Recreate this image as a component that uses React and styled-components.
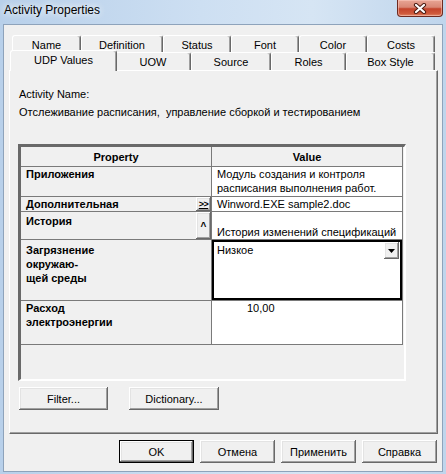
import React from 'react';
import styled, { createGlobalStyle, css } from 'styled-components';

const GlobalStyle = createGlobalStyle`
  html, body { margin: 0; padding: 0; background: #fff; }
  body {
    font-family: "Liberation Sans", Arial, sans-serif;
    font-size: 11px;
    color: #000;
  }
`;

const raised = css`
  background: #f0f0f0;
  box-shadow: inset -1px -1px #696969, inset 1px 1px #ffffff,
    inset -2px -2px #a0a0a0, inset 2px 2px #e3e3e3;
`;

const rowTabs = [
  { label: 'Name', w: 69 },
  { label: 'Definition', w: 82 },
  { label: 'Status', w: 68 },
  { label: 'Font', w: 68 },
  { label: 'Color', w: 68 },
  { label: 'Costs', w: 68 },
];

const frontTabs = [
  { label: 'UDP Values', w: 103, active: true },
  { label: 'UOW', w: 76 },
  { label: 'Source', w: 80 },
  { label: 'Roles', w: 75 },
  { label: 'Box Style', w: 89 },
];

const CloseIcon = () => (
  <svg width="14" height="11" viewBox="0 0 14 11">
    <path d="M3 2 L11 9 M11 2 L3 9" stroke="#4b1b12" strokeWidth="4.2" strokeLinecap="round" />
    <path d="M3 2 L11 9 M11 2 L3 9" stroke="#ffffff" strokeWidth="2.2" strokeLinecap="round" />
  </svg>
);

const DownArrow = () => (
  <svg width="7" height="4" viewBox="0 0 7 4">
    <path d="M0 0 H7 L3.5 4 Z" fill="#000" />
  </svg>
);

export default function App() {
  return (
    <>
      <GlobalStyle />
      <Window>
        <TitleBar>
          <Title>Activity Properties</Title>
          <CloseButton><CloseIcon /></CloseButton>
        </TitleBar>
        <Client>
          <TabRows>
            <TabRow $h={17}>
              {rowTabs.map(t => <Tab key={t.label} $w={t.w}>{t.label}</Tab>)}
            </TabRow>
            <TabRow $h={18}>
              {frontTabs.map(t => <Tab key={t.label} $w={t.w} $active={t.active}>{t.label}</Tab>)}
            </TabRow>
          </TabRows>
          <Panel>
            <Caption>Activity Name:</Caption>
            <NameText>Отслеживание расписания,  управление сборкой и тестированием</NameText>
            <Table>
              <Grid>
                <Row $h={20}>
                  <HeaderCell $left>Property</HeaderCell>
                  <HeaderCell>Value</HeaderCell>
                </Row>
                <Row $h={30}>
                  <LabelCell><LabelText>Приложения</LabelText></LabelCell>
                  <ValueCell>Модуль создания и контроля<br />расписания выполнения работ.</ValueCell>
                </Row>
                <Row $h={15}>
                  <LabelCell>
                    <LabelText>Дополнительная</LabelText>
                    <CellButton><MoreGlyph>&gt;&gt;</MoreGlyph></CellButton>
                  </LabelCell>
                  <ValueCell>Winword.EXE sample2.doc</ValueCell>
                </Row>
                <Row $h={28}>
                  <LabelCell>
                    <LabelText $pt={2}>История</LabelText>
                    <CellButton><UpGlyph>^</UpGlyph></CellButton>
                  </LabelCell>
                  <ValueCell $pt={13}>История изменений спецификаций</ValueCell>
                </Row>
                <Row $h={61}>
                  <LabelCell>
                    <LabelText $pt={3}>Загрязнение<br />окружаю-<br />щей среды</LabelText>
                  </LabelCell>
                  <Combo>
                    <ComboText>Низкое</ComboText>
                    <ComboButton><DownArrow /></ComboButton>
                  </Combo>
                </Row>
                <Row $h={44}>
                  <LabelCell><LabelText>Расход<br />электроэнергии</LabelText></LabelCell>
                  <ValueCell $pl={35}>10,00</ValueCell>
                </Row>
              </Grid>
            </Table>
            <PanelButtons>
              <PushButton $w={89}>Filter...</PushButton>
              <PushButton $w={90}>Dictionary...</PushButton>
            </PanelButtons>
          </Panel>
          <DialogButtons>
            <PushButton $w={75} $default>OK</PushButton>
            <PushButton $w={75}>Отмена</PushButton>
            <PushButton $w={75}>Применить</PushButton>
            <PushButton $w={75}>Справка</PushButton>
          </DialogButtons>
        </Client>
      </Window>
    </>
  );
}

const Window = styled.div`
  width: 446px;
  height: 474px;
  box-sizing: border-box;
  display: flex;
  flex-direction: column;
  padding: 0 3px 2px 3px;
  background: linear-gradient(to right, #b8d0ea 0%, #cddff2 45%, #d6e5f4 70%, #bfd5ec 100%);
`;

const TitleBar = styled.div`
  height: 24px;
  display: flex;
  align-items: flex-start;
  justify-content: space-between;
`;

const Title = styled.div`
  font-size: 12px;
  line-height: 20px;
  padding-left: 1px;
  color: #000;
  text-shadow: 0 0 6px rgba(255, 255, 255, 0.95), 0 0 10px rgba(255, 255, 255, 0.8);
`;

const CloseButton = styled.div`
  width: 46px;
  height: 17px;
  box-sizing: border-box;
  display: flex;
  align-items: center;
  justify-content: center;
  border: 1px solid #6e2a20;
  border-top: none;
  border-radius: 0 0 4px 4px;
  background: linear-gradient(to bottom, #e8a595 0%, #d98775 45%, #c4442c 55%, #cf5a3c 85%, #e08a6a 100%);
  box-shadow: inset 0 0 0 1px rgba(255, 210, 200, 0.5);
`;

const Client = styled.div`
  flex: 1;
  display: flex;
  flex-direction: column;
  border: 1px solid #8ea3bb;
  background: #f0f0f0;
  padding: 10px 4px 8px 5px;
`;

const TabRows = styled.div`
  display: flex;
  flex-direction: column;
  padding-left: 3px;
`;

const TabRow = styled.div`
  display: flex;
  align-items: flex-start;
  height: ${p => p.$h}px;
`;

const Tab = styled.div`
  box-sizing: border-box;
  width: ${p => p.$w}px;
  height: 100%;
  flex-shrink: 0;
  display: flex;
  align-items: center;
  justify-content: center;
  padding-top: 1px;
  background: #f0f0f0;
  border-top: 1px solid #fff;
  border-left: 1px solid #fff;
  border-right: 1px solid #696969;
  border-radius: 3px 3px 0 0;
  box-shadow: inset -1px 0 #a0a0a0;
  white-space: nowrap;

  ${p => p.$active && css`
    position: relative;
    z-index: 1;
    width: ${p.$w + 4}px;
    height: 21px;
    margin: -2px -2px 0 -2px;
    padding-top: 0;
    padding-bottom: 2px;
  `}
`;

const Panel = styled.div`
  flex: 1;
  display: flex;
  flex-direction: column;
  align-items: flex-start;
  border-top: 1px solid #fff;
  border-left: 1px solid #fff;
  border-right: 1px solid #696969;
  border-bottom: 1px solid #696969;
  box-shadow: inset -1px -1px #a0a0a0;
  padding: 16px 0 0 8px;
`;

const Caption = styled.div`
  line-height: 15px;
  margin-left: 1px;
`;

const NameText = styled.div`
  line-height: 15px;
  margin: 3px 0 0 1px;
  white-space: pre;
`;

const Table = styled.div`
  width: 388px;
  height: 237px;
  box-sizing: border-box;
  margin-top: 24px;
  border-top: 3px solid #696969;
  border-left: 3px solid #696969;
  border-right: 2px solid #fff;
  border-bottom: 2px solid #fff;
  background: #f0f0f0;
`;

const Grid = styled.div`
  width: 382px;
  box-sizing: border-box;
  border-right: 1px solid #7a7a7a;
`;

const Row = styled.div`
  display: flex;
  height: ${p => p.$h}px;
  box-sizing: border-box;
  border-bottom: 1px solid #7a7a7a;
  line-height: 14px;
`;

const HeaderCell = styled.div`
  box-sizing: border-box;
  ${p => p.$left ? css`width: 191px; border-right: 1px solid #7a7a7a;` : css`flex: 1;`}
  display: flex;
  align-items: center;
  justify-content: center;
  font-weight: bold;
  background: #f0f0f0;
`;

const LabelCell = styled.div`
  width: 191px;
  box-sizing: border-box;
  flex-shrink: 0;
  display: flex;
  justify-content: space-between;
  border-right: 1px solid #7a7a7a;
  background: #f0f0f0;
`;

const LabelText = styled.span`
  padding: ${p => p.$pt || 0}px 0 0 5px;
  font-weight: bold;
`;

const ValueCell = styled.div`
  flex: 1;
  background: #fff;
  padding: ${p => p.$pt || 0}px 0 0 ${p => p.$pl || 5}px;
  white-space: nowrap;
  overflow: hidden;
`;

const CellButton = styled.div`
  width: 15px;
  height: 100%;
  box-sizing: border-box;
  flex-shrink: 0;
  display: flex;
  justify-content: center;
  ${raised}
`;

const MoreGlyph = styled.span`
  font-size: 9px;
  font-weight: bold;
  line-height: 12px;
  margin-top: 1px;
  text-decoration: underline;
  color: #000;
  letter-spacing: -0.5px;
`;

const UpGlyph = styled.span`
  align-self: center;
  font-size: 10px;
  font-weight: bold;
  line-height: 10px;
  margin-top: 2px;
`;

const Combo = styled.div`
  flex: 1;
  display: flex;
  align-items: flex-start;
  border: 2px solid #000;
  background: #fff;
`;

const ComboText = styled.span`
  flex: 1;
  padding: 1px 0 0 3px;
`;

const ComboButton = styled.div`
  width: 15px;
  height: 17px;
  box-sizing: border-box;
  display: flex;
  align-items: center;
  justify-content: center;
  margin-right: 1px;
  ${raised}
`;

const PanelButtons = styled.div`
  display: flex;
  gap: 21px;
  margin: 6px 0 0 1px;
`;

const PushButton = styled.div`
  width: ${p => p.$w}px;
  height: 23px;
  box-sizing: border-box;
  display: flex;
  align-items: center;
  justify-content: center;
  ${raised}
  ${p => p.$default && css`
    box-shadow: inset 0 0 0 1px #000, inset -2px -2px #696969, inset 2px 2px #ffffff,
      inset -3px -3px #a0a0a0, inset 3px 3px #e3e3e3;
  `}
`;

const DialogButtons = styled.div`
  display: flex;
  justify-content: flex-end;
  gap: 6px;
  margin: 6px 1px 0 0;
`;
